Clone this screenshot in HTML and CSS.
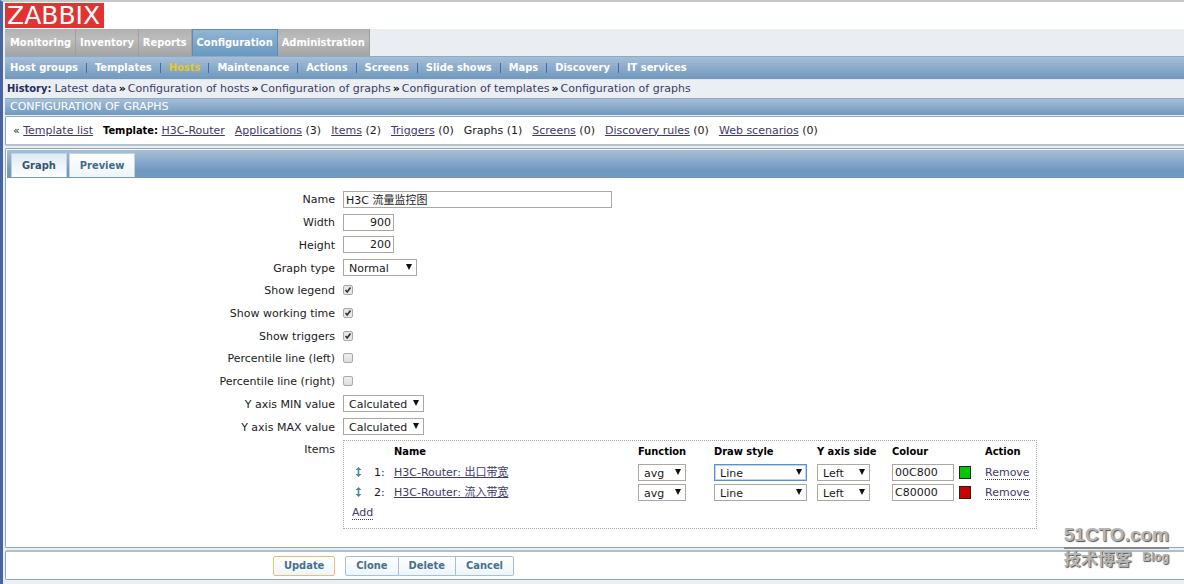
FILE: index.html
```html
<!DOCTYPE html>
<html lang="en">
<head>
<meta charset="utf-8">
<title>Configuration of graphs</title>
<link rel="stylesheet" href="styles.css">
</head>
<body>
<header class="top"><a class="logo" href="#">ZABBIX</a></header>
<nav class="tabs">
  <a href="#">Monitoring</a><a href="#">Inventory</a><a href="#">Reports</a><a class="active" href="#">Configuration</a><a href="#">Administration</a>
</nav>
<nav class="submenu">
  <a href="#">Host groups</a><a href="#">Templates</a><a class="current" href="#">Hosts</a><a href="#">Maintenance</a><a href="#">Actions</a><a href="#">Screens</a><a href="#">Slide shows</a><a href="#">Maps</a><a href="#">Discovery</a><a href="#">IT services</a>
</nav>
<nav class="history">
  <b class="history-label">History:</b><a href="#">Latest data</a><i>»</i><a href="#">Configuration of hosts</a><i>»</i><a href="#">Configuration of graphs</a><i>»</i><a href="#">Configuration of templates</a><i>»</i><a href="#">Configuration of graphs</a>
</nav>
<h1 class="title">CONFIGURATION OF GRAPHS</h1>
<nav class="panel objects">
  <span>« <a href="#">Template list</a></span>
  <span><b>Template:</b> <a href="#">H3C-Router</a></span>
  <span><a href="#">Applications</a> (3)</span>
  <span><a href="#">Items</a> (2)</span>
  <span><a href="#">Triggers</a> (0)</span>
  <span>Graphs (1)</span>
  <span><a href="#">Screens</a> (0)</span>
  <span><a href="#">Discovery rules</a> (0)</span>
  <span><a href="#">Web scenarios</a> (0)</span>
</nav>
<main class="panel main">
  <div class="form-tabs">
    <button type="button" class="selected">Graph</button>
    <button type="button">Preview</button>
  </div>
  <form class="form" id="graph">
    <div class="fields">
      <label for="name">Name</label><input class="text wide" id="name" type="text" value="H3C 流量监控图">
      <label for="width">Width</label><input class="text number" id="width" type="text" value="900">
      <label for="height">Height</label><input class="text number" id="height" type="text" value="200">
      <label for="type">Graph type</label><span class="select type"><select id="type"><option>Normal</option></select></span>
      <label for="legend">Show legend</label><input class="check" id="legend" type="checkbox" checked>
      <label for="work">Show working time</label><input class="check" id="work" type="checkbox" checked>
      <label for="trig">Show triggers</label><input class="check" id="trig" type="checkbox" checked>
      <label for="pleft">Percentile line (left)</label><input class="check" id="pleft" type="checkbox">
      <label for="pright">Percentile line (right)</label><input class="check" id="pright" type="checkbox">
      <label for="ymin">Y axis MIN value</label><span class="select calc"><select id="ymin"><option>Calculated</option></select></span>
      <label for="ymax">Y axis MAX value</label><span class="select calc"><select id="ymax"><option>Calculated</option></select></span>
    </div>
    <div class="items-row">
      <span class="items-label">Items</span>
      <div class="items">
        <table>
          <colgroup><col class="c-drag"><col class="c-num"><col class="c-name"><col class="c-func"><col class="c-draw"><col class="c-side"><col class="c-colour"><col class="c-action"></colgroup>
          <thead><tr><th></th><th></th><th>Name</th><th>Function</th><th>Draw style</th><th>Y axis side</th><th>Colour</th><th>Action</th></tr></thead>
          <tbody>
            <tr>
              <td class="drag"><svg width="7" height="10" viewBox="0 0 7 10"><path d="M3.5 0 6.5 3H4.3v4h2.2l-3 3-3-3h2.2V3H.5z"/></svg></td>
              <td class="words">1:</td><td class="words"><a href="#">H3C-Router: 出口带宽</a></td>
              <td><span class="select func"><select aria-label="Function 1"><option>avg</option></select></span></td>
              <td><span class="select draw focused"><select aria-label="Draw style 1"><option>Line</option></select></span></td>
              <td><span class="select side"><select aria-label="Y axis side 1"><option>Left</option></select></span></td>
              <td><div class="colour"><input class="text" type="text" aria-label="Colour 1" value="00C800"><button type="button" class="swatch green" aria-label="Pick colour 1"></button></div></td>
              <td class="words"><button type="button" class="link">Remove</button></td>
            </tr>
            <tr>
              <td class="drag"><svg width="7" height="10" viewBox="0 0 7 10"><path d="M3.5 0 6.5 3H4.3v4h2.2l-3 3-3-3h2.2V3H.5z"/></svg></td>
              <td class="words">2:</td><td class="words"><a href="#">H3C-Router: 流入带宽</a></td>
              <td><span class="select func"><select aria-label="Function 2"><option>avg</option></select></span></td>
              <td><span class="select draw"><select aria-label="Draw style 2"><option>Line</option></select></span></td>
              <td><span class="select side"><select aria-label="Y axis side 2"><option>Left</option></select></span></td>
              <td><div class="colour"><input class="text" type="text" aria-label="Colour 2" value="C80000"><button type="button" class="swatch red" aria-label="Pick colour 2"></button></div></td>
              <td class="words"><button type="button" class="link">Remove</button></td>
            </tr>
          </tbody>
        </table>
        <button type="button" class="link add">Add</button>
      </div>
    </div>
  </form>
</main>
<footer class="panel actions">
  <button class="update" type="submit" form="graph">Update</button>
  <div class="group"><button type="button">Clone</button><button type="button">Delete</button><button type="button">Cancel</button></div>
</footer>
<div class="mark"><div class="mark-name">51CTO.com</div><div class="mark-sub"><span>技术博客</span><small>Blog</small></div></div>
</body>
</html>
```
FILE: styles.css
```css
* { box-sizing: border-box; }
html { min-height: 100%; background: #eaeff3; }
body {
  margin: 0;
  padding-left: 2px;
  border-left: 3px solid #4a659d;
  border-top: 2px solid #c8c8c8;
  min-height: 100vh;
  color: #1a1a1a;
  font: 11px/14px "DejaVu Sans", "Noto Sans CJK SC", sans-serif;
  white-space: nowrap;
}
a { color: #403a66; }
b, th { color: #000; }
input, select, button { font: inherit; color: inherit; margin: 0; }
b, th, .tabs a, .submenu a, .form-tabs button, .actions button { font-family: "DejaVu Sans Condensed", sans-serif; font-weight: bold; }

.top { height: 27px; padding-top: 1px; background: #fff; }
.logo { display: block; width: 99px; height: 25px; padding-left: 2px; background: #e03434; color: #fff; font-size: 25px; line-height: 26px; text-decoration: none; }

.tabs { display: flex; height: 27px; background: #eaeef2; }
.tabs a { padding: 0 4px; border-right: 1px solid #a0a0a0; background: linear-gradient(#b0b0b0, #bcbcbc 35%, #a4a4a4); line-height: 27px; }
.tabs a.active { border: 1px solid #5b8db8; border-bottom: 0; background: linear-gradient(#92b5d3, #6898c2); line-height: 25px; }
.tabs a:first-child { padding-left: 5px; }
.tabs a, .submenu a { color: #fff; text-decoration: none; }

.submenu { display: flex; align-items: center; height: 24px; padding-left: 5px; border-top: 1px solid #91a9c2; border-bottom: 1px solid #dce6ee; background: linear-gradient(#a5bed8, #7098be); }
.submenu a + a { margin-left: 8px; padding-left: 8px; border-left: 1px solid #4c6ba6; line-height: 10px; }
.submenu a.current { color: #e6c827; }

.history { display: flex; align-items: center; height: 18px; padding-left: 2px; }
.history-label { margin-right: 3px; color: #2a2a5e; }
.history a { text-decoration: none; }
.history i { margin: 0 2px; color: #000; font-style: normal; font-weight: bold; }

.title { margin: 0; height: 17px; padding-left: 5px; border-top: 1px solid #91a9c2; background: linear-gradient(#a5bed8, #7098be); color: #fff; font-size: 11px; font-weight: normal; line-height: 15px; }

.panel { border: 1px solid #91a7b8; border-right: 0; border-radius: 2px 0 0 2px; background: #fff; }
.objects { display: flex; align-items: center; gap: 10px; height: 30px; margin-top: 1px; padding-left: 7px; border-bottom: 2px solid #b5c4d0; }

.main { margin-top: 2px; padding: 1px 0 0 1px; min-height: 400px; }
.form-tabs { display: flex; align-items: flex-end; gap: 2px; height: 28px; padding-left: 4px; background: linear-gradient(#a8bfd8, #7099c0 75%); border-bottom: 1px solid #7899b8; }
.form-tabs button { height: 24px; padding: 0 10px; border: 1px solid #c2d4e2; border-bottom: 0; background: linear-gradient(#fff, #eef5fa); color: #3f6b90; }
.form-tabs .selected { background: linear-gradient(#dfeaf5, #fff); color: #35536e; }

.form { padding-top: 10px; }
.fields { display: grid; grid-template-columns: 328px 1fr; grid-auto-rows: 1fr; column-gap: 8px; align-items: center; min-height: 250px; }
.fields label, .items-label { text-align: right; }
.fields > * { justify-self: start; }
.fields label { justify-self: end; padding-top: 2px; }
.text { height: 17px; padding: 0 2px; border: 1px solid #aaa99f; background: #fff; }
.wide { width: 269px; }
.number { width: 51px; text-align: right; }
.check { appearance: none; display: grid; place-items: center; width: 10px; height: 10px; border: 1px solid #aaa; border-radius: 2px; background: linear-gradient(#eee, #ddd); }
.check:checked { background: url("data:image/svg+xml,%3Csvg xmlns='http://www.w3.org/2000/svg' viewBox='0 0 8 8'%3E%3Cpath d='M1.5 4 3.2 6 6.5 1.5' fill='none' stroke='%23333' stroke-width='1.7'/%3E%3C/svg%3E") #e6e6e6; }

.select { display: block; position: relative; height: 17px; }
.select select { appearance: none; display: block; width: 100%; height: 100%; padding: 0 5px; border: 1px solid #aaa99f; border-radius: 0; background: #fff; line-height: 17px; }
.select::after { content: ""; position: absolute; right: 5px; top: 5px; border: solid transparent; border-width: 6px 3px 0; border-top-color: #111; pointer-events: none; }
.select.focused select { border-color: #5c8fd6; outline: 1px solid #bcd3f2; outline-offset: -2px; }
.type { width: 74px; }
.calc { width: 81px; }
.func { width: 48px; }
.draw { width: 93px; }
.side { width: 53px; }

.items-row { display: grid; grid-template-columns: 328px 694px; column-gap: 8px; margin-top: 2px; }
.items-label { padding-top: 3px; }
.items { padding: 1px 0 6px; border: 1px dotted #9ea4a8; }
.items table { width: 100%; table-layout: fixed; border-collapse: collapse; }
.items th, .items td { padding: 0; height: 20px; text-align: left; vertical-align: middle; }
.items .words { padding-top: 2px; }
.c-drag { width: 30px; }
.c-num { width: 20px; }
.c-name { width: 244px; }
.c-func { width: 76px; }
.c-draw { width: 103px; }
.c-side { width: 75px; }
.c-colour { width: 93px; }
.items .drag { padding-left: 11px; }
.drag svg { display: block; fill: #4c87ad; }
.colour { display: flex; align-items: center; gap: 5px; }
.colour .text { width: 62px; }
.swatch { width: 12px; height: 13px; padding: 0; border: 1px solid #222; }
.green { background: #00c800; }
.red { background: #c80000; }
.link { padding: 0; border: 0; border-bottom: 1px dotted #403a66; background: none; color: #403a66; line-height: 12px; }
.add { display: block; margin: 5px 0 2px 8px; }

.actions { display: flex; align-items: center; gap: 10px; height: 30px; margin-top: 2px; padding-left: 267px; border-top: 2px solid #b0bfca; }
.actions button { height: 20px; padding: 0 10px; border: 1px solid #a9bfce; background: linear-gradient(#fff, #edf5fa); color: #47708f; }
.actions .update { border-color: #e7c078; border-radius: 2px; }
.group { display: flex; }
.group button + button { border-left: 0; }
.group button:first-child { border-radius: 2px 0 0 2px; }
.group button:last-child { border-radius: 0 2px 2px 0; }

.mark { position: absolute; right: 15px; bottom: 13px; color: #b5b5b5; text-shadow: 1px 1px 1px #555; font-family: "Liberation Sans", "Noto Sans CJK SC", sans-serif; font-weight: bold; }
.mark-name { border-bottom: 2px solid #888; font-size: 19px; line-height: 25px; }
.mark-sub { display: flex; justify-content: space-between; font-size: 17px; line-height: 22px; }
.mark-sub small { font-size: 12px; line-height: 16px; }
```
